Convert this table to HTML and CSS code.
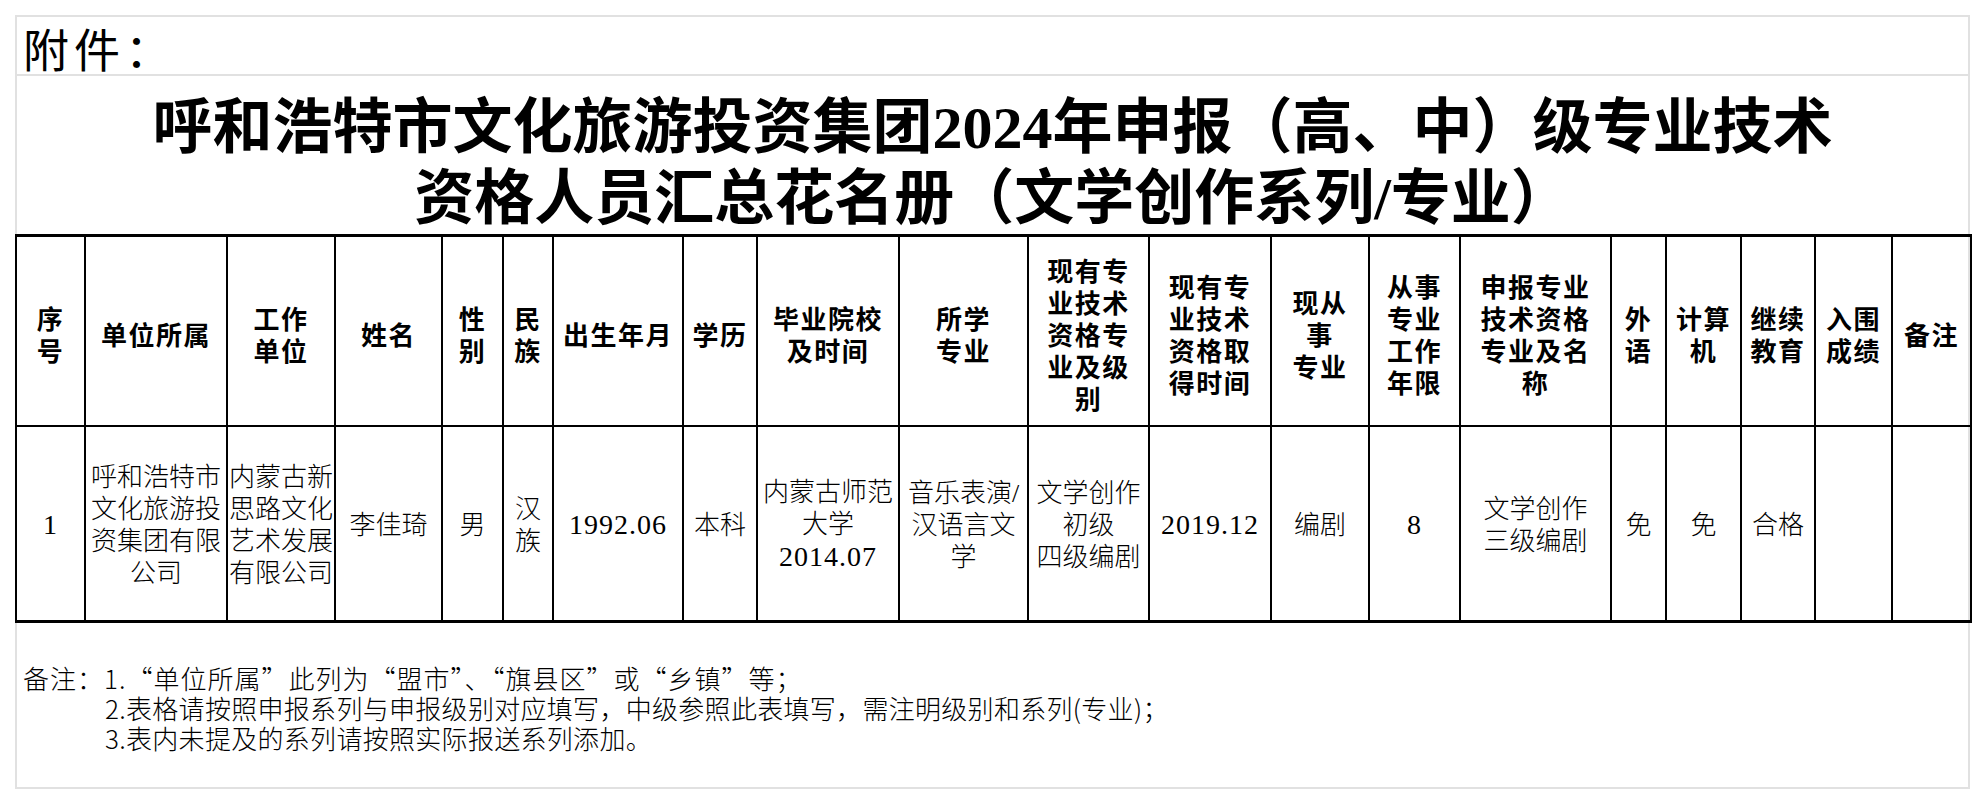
FILE: index.html
```html
<!DOCTYPE html>
<html lang="zh-CN">
<head>
<meta charset="utf-8">
<title>花名册</title>
<link rel="stylesheet" href="styles.css">
</head>
<body>
<div class="sheet">
  <div class="attach">附件：</div>
  <div class="title">
    <div class="title-line">呼和浩特市文化旅游投资集团2024年申报（高、中）级专业技术</div>
    <div class="title-line">资格人员汇总花名册（文学创作系列/专业）</div>
  </div>
  <table class="roster">
    <colgroup>
      <col class="c69"><col class="c142"><col class="c108"><col class="c107"><col class="c61">
      <col class="c50"><col class="c130"><col class="c74"><col class="c142"><col class="c129">
      <col class="c121"><col class="c122"><col class="c98"><col class="c91"><col class="c151">
      <col class="c55"><col class="c75"><col class="c74"><col class="c77"><col class="c79">
    </colgroup>
    <thead>
      <tr>
        <th>序<br>号</th>
        <th>单位所属</th>
        <th>工作<br>单位</th>
        <th>姓名</th>
        <th>性<br>别</th>
        <th>民<br>族</th>
        <th>出生年月</th>
        <th>学历</th>
        <th>毕业院校<br>及时间</th>
        <th>所学<br>专业</th>
        <th>现有专<br>业技术<br>资格专<br>业及级<br>别</th>
        <th>现有专<br>业技术<br>资格取<br>得时间</th>
        <th>现从<br>事<br>专业</th>
        <th>从事<br>专业<br>工作<br>年限</th>
        <th>申报专业<br>技术资格<br>专业及名<br>称</th>
        <th>外<br>语</th>
        <th>计算<br>机</th>
        <th>继续<br>教育</th>
        <th>入围<br>成绩</th>
        <th>备注</th>
      </tr>
    </thead>
    <tbody>
      <tr>
        <td><span class="num">1</span></td>
        <td>呼和浩特市<br>文化旅游投<br>资集团有限<br>公司</td>
        <td>内蒙古新<br>思路文化<br>艺术发展<br>有限公司</td>
        <td>李佳琦</td>
        <td>男</td>
        <td>汉<br>族</td>
        <td><span class="num">1992.06</span></td>
        <td>本科</td>
        <td>内蒙古师范<br>大学<br><span class="num">2014.07</span></td>
        <td>音乐表演/<br>汉语言文<br>学</td>
        <td>文学创作<br>初级<br>四级编剧</td>
        <td><span class="num">2019.12</span></td>
        <td>编剧</td>
        <td><span class="num">8</span></td>
        <td>文学创作<br>三级编剧</td>
        <td>免</td>
        <td>免</td>
        <td>合格</td>
        <td></td>
        <td></td>
      </tr>
    </tbody>
  </table>
  <div class="notes">
    <p class="note note-first">备注：1.“单位所属”此列为“盟市”、“旗县区”或“乡镇”等；</p>
    <p class="note indent">2.表格请按照申报系列与申报级别对应填写，中级参照此表填写，需注明级别和系列(专业)；</p>
    <p class="note indent">3.表内未提及的系列请按照实际报送系列添加。</p>
  </div>
</div>
</body>
</html>
```

FILE: styles.css
```css
html, body {
  margin: 0;
  padding: 0;
  background: #ffffff;
}

.sheet {
  margin: 15px 0 0 15px;
  width: 1955px;
  height: 774px;
  box-sizing: border-box;
  border: 2px solid #e1e1e1;
  font-family: "Noto Sans CJK SC", sans-serif;
  color: #000;
}

.attach {
  height: 59px;
  box-sizing: border-box;
  border-bottom: 2px solid #e1e1e1;
  padding: 3px 0 0 6px;
  font-size: 46px;
  letter-spacing: 5px;
  line-height: 54px;
  font-weight: 400;
}

.title {
  height: 158px;
  box-sizing: border-box;
  padding-top: 17px;
  text-align: center;
  font-family: "Liberation Serif", "Noto Sans CJK SC", serif;
  font-weight: 700;
  font-size: 60px;
  line-height: 71px;
}

.roster {
  width: 1955px;
  margin-left: -2px;
  border-collapse: collapse;
  table-layout: fixed;
}

.c69 { width: 69px; }
.c142 { width: 142px; }
.c108 { width: 108px; }
.c107 { width: 107px; }
.c61 { width: 61px; }
.c50 { width: 50px; }
.c130 { width: 130px; }
.c74 { width: 74px; }
.c129 { width: 129px; }
.c121 { width: 121px; }
.c122 { width: 122px; }
.c98 { width: 98px; }
.c91 { width: 91px; }
.c151 { width: 151px; }
.c55 { width: 55px; }
.c75 { width: 75px; }
.c77 { width: 77px; }
.c79 { width: 79px; }

.roster th,
.roster td {
  border: 2px solid #000;
  padding: 0;
  text-align: center;
  vertical-align: middle;
  overflow: hidden;
}

.roster thead tr:first-child th {
  border-top-width: 3px;
}

.roster tbody tr:last-child td {
  border-bottom-width: 3px;
}

.roster th {
  height: 182px;
  padding-top: 6px;
  font-family: "Noto Sans CJK SC", sans-serif;
  font-weight: 700;
  font-size: 26px;
  letter-spacing: 1.5px;
  line-height: 32px;
}

.roster td {
  height: 189px;
  padding-top: 4px;
  font-family: "Liberation Serif", "Noto Sans CJK SC", serif;
  font-weight: 300;
  font-size: 26px;
  line-height: 32px;
}

.num {
  font-family: "Liberation Serif", serif;
  font-weight: 400;
  font-size: 28px;
  letter-spacing: 1px;
}

.notes {
  padding: 40px 0 0 6px;
}

.note {
  margin: 0;
  font-family: "Noto Sans CJK SC", sans-serif;
  font-weight: 300;
  font-size: 26px;
  letter-spacing: 0.3px;
  line-height: 30px;
  white-space: nowrap;
}

.note-first {
  letter-spacing: 1px;
}

.indent {
  padding-left: 82px;
}
```
